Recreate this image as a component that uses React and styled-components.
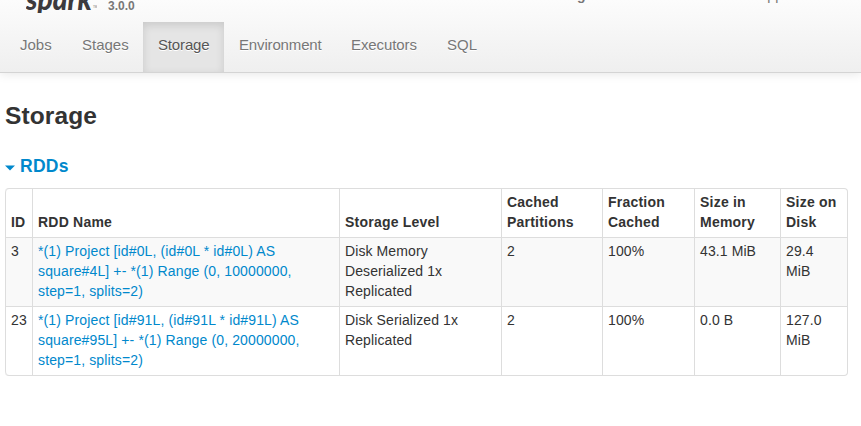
import React from "react";
import styled, { createGlobalStyle } from "styled-components";

const GlobalStyle = createGlobalStyle`
  * { box-sizing: border-box; }
  body {
    margin: 0;
    background: #fff;
    color: #333;
    font: 14px/20px "Liberation Sans", Arial, sans-serif;
    overflow: hidden;
  }
`;

const Navbar = styled.header`
  height: 73px;
  overflow: visible;
  background: linear-gradient(to bottom, #fcfcfc, #efefef);
  border-bottom: 1px solid #d4d4d4;
  box-shadow: 0 1px 10px rgba(0, 0, 0, 0.1);
`;

const Brand = styled.div`
  height: 22px;
  display: flex;
  overflow: hidden;
  padding-left: 26px;
`;

const Logo = styled.svg`
  width: 71px;
  height: 13px;
  flex: none;
`;

const Version = styled.span`
  width: 40px;
  margin: -4px 0 0 11px;
  font-size: 12px;
  font-weight: bold;
  color: #777;
`;

const AppName = styled.div`
  display: flex;
  gap: 174px;
  margin: -15px 0 0 429px;
  font-size: 14px;
  color: #777;
  white-space: nowrap;
`;

const Tabs = styled.nav`
  display: flex;
  height: 50px;
  padding-left: 5px;
`;

const Tab = styled.a`
  width: ${(p) => p.$width}px;
  padding: 13px 0 0 15px;
  font-size: 15px;
  letter-spacing: ${(p) => p.$spacing || 0}px;
  white-space: nowrap;
  text-decoration: none;
  text-shadow: 0 1px 0 #fff;
  color: ${(p) => (p.$active ? "#555" : "#777")};
  background: ${(p) => (p.$active ? "#e5e5e5" : "transparent")};
  box-shadow: ${(p) => (p.$active ? "inset 0 3px 8px rgba(0, 0, 0, 0.125)" : "none")};
`;

const Content = styled.main`
  padding: 23px 13px 0 5px;
`;

const Title = styled.h3`
  margin: 0;
  font-size: 24.5px;
  line-height: 40px;
  letter-spacing: 0.1px;
`;

const SectionToggle = styled.h4`
  display: flex;
  align-items: center;
  gap: 5px;
  margin: 20px 0 12px;
  font-size: 17.5px;
  line-height: 20px;
  letter-spacing: 0.25px;
  color: #08c;
`;

const Caret = styled.svg`
  width: 10px;
  height: 6px;
  margin-top: 3px;
`;

const Table = styled.table`
  width: 843px;
  table-layout: fixed;
  border: 1px solid #ddd;
  border-left: 0;
  border-collapse: separate;
  border-spacing: 0;
  border-radius: 4px;
`;

const Cell = styled.td`
  height: 69px;
  padding: 3px 5px 5px;
  border-left: 1px solid #ddd;
  border-top: 1px solid #ddd;
  vertical-align: top;
  background: ${(p) => (p.$striped ? "#f9f9f9" : "transparent")};
  &:first-child { white-space: nowrap; }
  tr:last-child > &:first-child { border-bottom-left-radius: 4px; }
`;

const HeadCell = styled.th`
  width: ${(p) => p.$width}px;
  padding: 3px 5px 5px;
  border-left: 1px solid #ddd;
  text-align: left;
  vertical-align: bottom;
  &:first-child { border-top-left-radius: 4px; }
`;

const Link = styled.a`
  color: #08c;
  text-decoration: none;
`;

const Line = styled.span`
  display: block;
  white-space: nowrap;
  letter-spacing: ${(p) => p.$spacing}px;
`;

const tabs = [
  { label: "Jobs", width: 62 },
  { label: "Stages", width: 76 },
  { label: "Storage", width: 81, active: true, spacing: -0.15 },
  { label: "Environment", width: 112, spacing: -0.15 },
  { label: "Executors", width: 96, spacing: -0.1 },
  { label: "SQL", width: 60 },
];

const columns = [
  { lines: ["ID"], width: 27 },
  { lines: ["RDD Name"], width: 307 },
  { lines: ["Storage Level"], width: 162 },
  { lines: ["Cached", "Partitions"], width: 101 },
  { lines: ["Fraction", "Cached"], width: 92 },
  { lines: ["Size in", "Memory"], width: 86 },
  { lines: ["Size on", "Disk"], width: 67 },
];

const rows = [
  [
    ["3"],
    ["*(1) Project [id#0L, (id#0L * id#0L) AS", "square#4L] +- *(1) Range (0, 10000000,", "step=1, splits=2)"],
    ["Disk Memory", "Deserialized 1x", "Replicated"],
    ["2"], ["100%"], ["43.1 MiB"], ["29.4", "MiB"],
  ],
  [
    ["23"],
    ["*(1) Project [id#91L, (id#91L * id#91L) AS", "square#95L] +- *(1) Range (0, 20000000,", "step=1, splits=2)"],
    ["Disk Serialized 1x", "Replicated"],
    ["2"], ["100%"], ["0.0 B"], ["127.0", "MiB"],
  ],
];

const Lines = ({ lines, spacing = 0.1 }) =>
  lines.map((line) => <Line key={line} $spacing={spacing}>{line}</Line>);

export default function App() {
  return (
    <>
      <GlobalStyle />
      <Navbar>
        <Brand>
          <Logo viewBox="0 0 71 13">
            <text x="0" y="9.7" fontFamily="Lato" fontWeight="900" fontStyle="italic" fontSize="30" textLength="66" lengthAdjust="spacingAndGlyphs" fill="#3c3a3e">spark</text>
            <text x="67" y="8" fontFamily="Liberation Sans" fontSize="3" fill="#777">TM</text>
          </Logo>
          <Version>3.0.0</Version>
          <AppName>
            <strong>g</strong>
            <span>application UI</span>
          </AppName>
        </Brand>
        <Tabs>
          {tabs.map((t) => (
            <Tab key={t.label} $width={t.width} $active={t.active} $spacing={t.spacing}>{t.label}</Tab>
          ))}
        </Tabs>
      </Navbar>
      <Content>
        <Title>Storage</Title>
        <SectionToggle>
          <Caret viewBox="0 0 10 6"><path d="M0 0.5H10L5 5.5Z" fill="#08c" /></Caret>
          RDDs
        </SectionToggle>
        <Table>
          <thead>
            <tr>
              {columns.map((c) => (
                <HeadCell key={c.lines.join(" ")} $width={c.width}><Lines lines={c.lines} spacing={0.22} /></HeadCell>
              ))}
            </tr>
          </thead>
          <tbody>
            {rows.map((row, r) => (
              <tr key={r}>
                {row.map((lines, i) => (
                  <Cell key={i} $striped={r % 2 === 0}>
                    {i === 1 ? <Link><Lines lines={lines} spacing={0.13} /></Link> : <Lines lines={lines} />}
                  </Cell>
                ))}
              </tr>
            ))}
          </tbody>
        </Table>
      </Content>
    </>
  );
}
